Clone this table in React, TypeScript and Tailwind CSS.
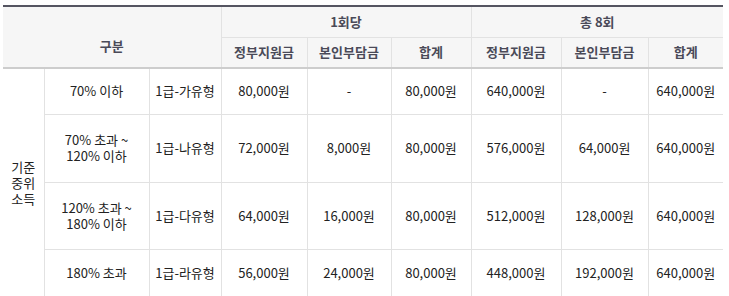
import React from 'react';

interface Row {
    range: React.ReactNode;
    grade: string;
    perGov: string;
    perSelf: string;
    perSum: string;
    totGov: string;
    totSelf: string;
    totSum: string;
    height: string;
}

const rows: Row[] = [
    { range: '70% 이하', grade: '1급-가유형', perGov: '80,000원', perSelf: '-', perSum: '80,000원', totGov: '640,000원', totSelf: '-', totSum: '640,000원', height: 'h-[46px]' },
    { range: <>70% 초과 ~<br />120% 이하</>, grade: '1급-나유형', perGov: '72,000원', perSelf: '8,000원', perSum: '80,000원', totGov: '576,000원', totSelf: '64,000원', totSum: '640,000원', height: 'h-[68px]' },
    { range: <>120% 초과 ~<br />180% 이하</>, grade: '1급-다유형', perGov: '64,000원', perSelf: '16,000원', perSum: '80,000원', totGov: '512,000원', totSelf: '128,000원', totSum: '640,000원', height: 'h-[67px]' },
    { range: '180% 초과', grade: '1급-라유형', perGov: '56,000원', perSelf: '24,000원', perSum: '80,000원', totGov: '448,000원', totSelf: '192,000원', totSum: '640,000원', height: 'h-[47px]' },
];

const th = 'font-bold text-[#4a4a58] text-[13px] text-center align-middle p-0 border border-[#e2e2e2]';
const td = 'text-[13px] text-[#222] text-center align-middle p-0 border border-[#e2e2e2]';

const App: React.FC = () => {
    return (
        <div className="w-[729px] h-[296px] overflow-hidden bg-white pt-[5px] pl-[3px] font-['Noto_Sans_CJK_KR',sans-serif]">
            <table className="table-fixed w-[720px] border-collapse border-t-2 border-t-[#555561] leading-[16px]">
                <colgroup>
                    <col className="w-[41px]" />
                    <col className="w-[105px]" />
                    <col className="w-[72px]" />
                    <col className="w-[86px]" />
                    <col className="w-[84px]" />
                    <col className="w-[80px]" />
                    <col className="w-[90px]" />
                    <col className="w-[87px]" />
                    <col className="w-[75px]" />
                </colgroup>
                <thead className="bg-[#f6f6f6]">
                    <tr className="h-[31px]">
                        <th colSpan={3} rowSpan={2} className={`${th} border-l-0 border-t-0 border-b-2 border-b-[#cdcdcd] pt-[18px]`}>구분</th>
                        <th colSpan={3} className={`${th} border-t-0`}>1회당</th>
                        <th colSpan={3} className={`${th} border-t-0 border-r-0`}>총 8회</th>
                    </tr>
                    <tr className="h-[31px]">
                        <th className={`${th} border-b-2 border-b-[#cdcdcd]`}>정부지원금</th>
                        <th className={`${th} border-b-2 border-b-[#cdcdcd]`}>본인부담금</th>
                        <th className={`${th} border-b-2 border-b-[#cdcdcd]`}>합계</th>
                        <th className={`${th} border-b-2 border-b-[#cdcdcd]`}>정부지원금</th>
                        <th className={`${th} border-b-2 border-b-[#cdcdcd]`}>본인부담금</th>
                        <th className={`${th} border-b-2 border-b-[#cdcdcd] border-r-0`}>합계</th>
                    </tr>
                </thead>
                <tbody>
                    {rows.map((r, i) => (
                        <tr key={i} className={r.height}>
                            {i === 0 && (
                                <td rowSpan={4} className={`${td} border-l-0 border-b-0 px-[8px]`}>
                                    기준<br />중위<br />소득
                                </td>
                            )}
                            <td className={td}>{r.range}</td>
                            <td className={td}>{r.grade}</td>
                            <td className={td}>{r.perGov}</td>
                            <td className={td}>{r.perSelf}</td>
                            <td className={td}>{r.perSum}</td>
                            <td className={td}>{r.totGov}</td>
                            <td className={td}>{r.totSelf}</td>
                            <td className={`${td} border-r-0`}>{r.totSum}</td>
                        </tr>
                    ))}
                </tbody>
            </table>
        </div>
    );
};

export default App;
